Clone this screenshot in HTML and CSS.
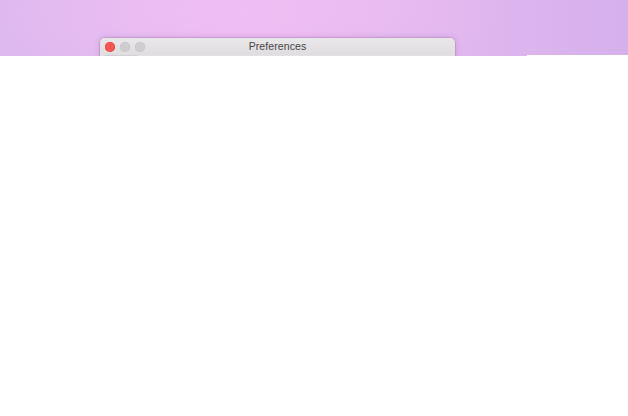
FILE: index.html
```html
<!DOCTYPE html>
<html>
<head>
<meta charset="utf-8">
<link rel="stylesheet" href="styles.css">
</head>
<body>
<div class="desktop">
  <div class="window">
    <div class="titlebar">
      <div class="lights">
        <span class="light red"></span>
        <span class="light gray"></span>
        <span class="light gray"></span>
      </div>
      <div class="title">Preferences</div>
    </div>
    <div class="toolbar"><span class="tab"></span></div>
  </div>
</div>
<div class="page"></div>
</body>
</html>
```
FILE: styles.css
```css
html, body { margin: 0; padding: 0; background: #ffffff; }
body { width: 628px; height: 416px; overflow: hidden; font-family: "Liberation Sans", Arial, sans-serif; }
.desktop {
  position: relative;
  height: 56px;
  background:
    radial-gradient(ellipse 260px 70px at 240px 10px, rgba(240,190,244,0.8), rgba(240,190,244,0) 100%),
    linear-gradient(90deg, #dcb9ef 0%, #e6bbf1 25%, #eabcf1 40%, #e2b8ef 70%, #d5b0ec 100%);
  overflow: hidden;
}
.window {
  position: absolute;
  left: 100px;
  top: 38px;
  width: 355px;
  height: 30px;
  border-radius: 5px 5px 0 0;
  background: #e3e1e3;
  box-shadow: 0 0 6px rgba(120, 60, 140, 0.25), 0 0 0 0.5px rgba(150, 130, 155, 0.6);
}
.titlebar {
  position: relative;
  height: 17px;
  display: flex;
  align-items: center;
  background: linear-gradient(#e9e7e9, #dfdddf);
  border-radius: 5px 5px 0 0;
}
.lights { display: flex; gap: 5px; padding-left: 5px; padding-top: 1px; }
.light { width: 10px; height: 10px; border-radius: 50%; display: block; }
.red { background: #fc5753; box-shadow: inset 0 0 0 0.5px #e0443e; }
.gray { background: #cfcdcf; box-shadow: inset 0 0 0 0.5px #c4c2c4; }
.title {
  position: absolute;
  left: 0; right: 0; top: 2px;
  text-align: center;
  font-size: 10.5px;
  color: #464446;
  letter-spacing: 0.1px;
}
.toolbar { height: 13px; padding-left: 4px; }
.tab { display: block; width: 34px; height: 13px; background: #d2d0d2; border-radius: 2px 2px 0 0; }
.page { position: relative; background: #fff; height: 360px; }
.page::before { content: ""; position: absolute; left: 527px; right: 0; top: -1px; height: 1px; background: #fff; }
```
